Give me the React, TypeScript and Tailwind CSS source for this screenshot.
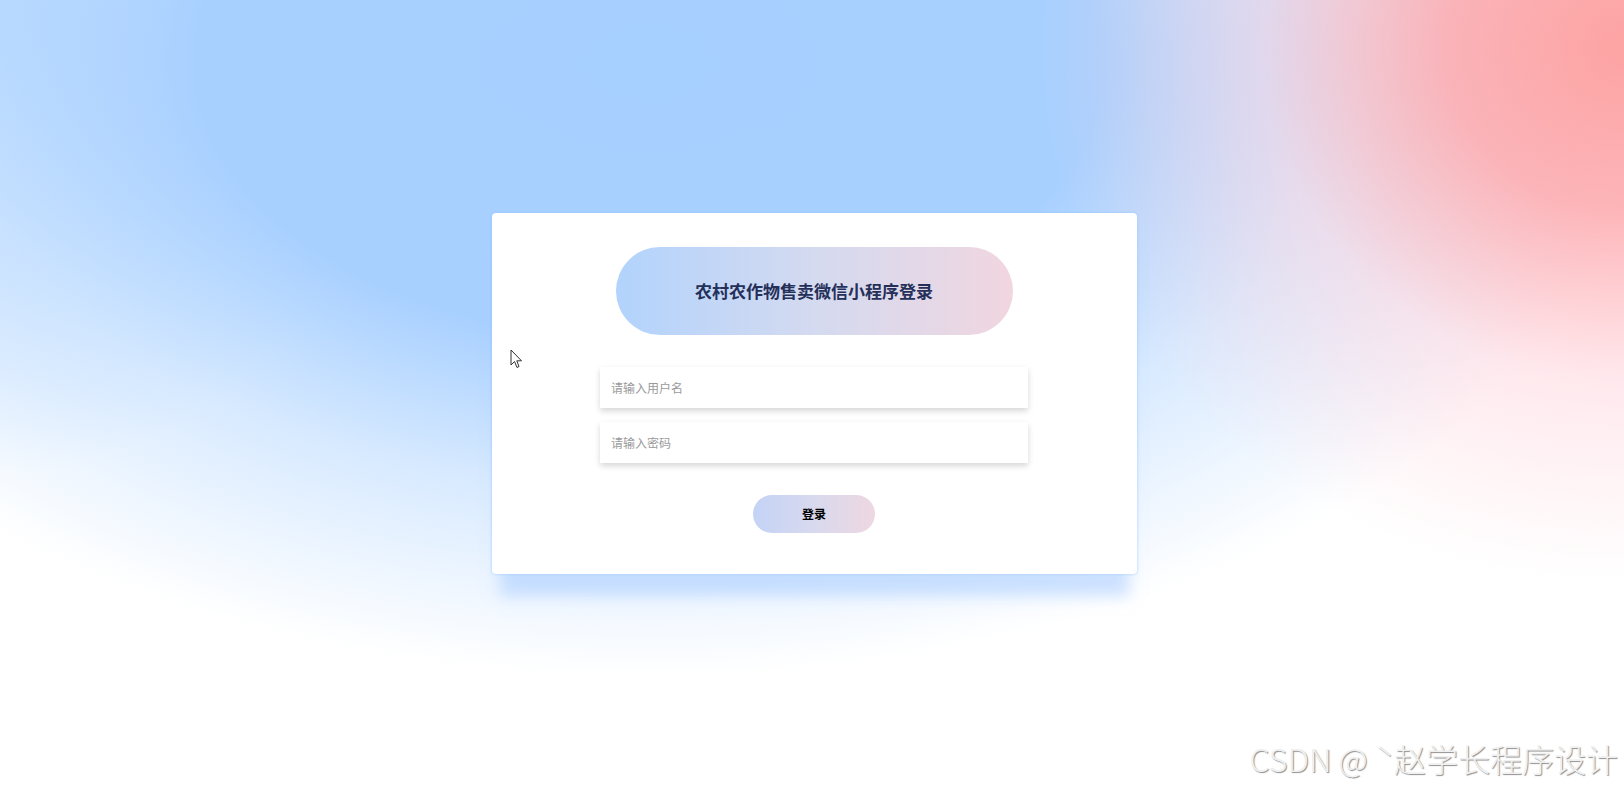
import React from "react";

const App: React.FC = () => {
  return (
    <div
      className="relative flex h-[787px] w-full items-center justify-center overflow-hidden bg-white bg-[radial-gradient(ellipse_36%_68%_at_100%_6%,#fda3a3_0%,rgba(253,168,172,0.85)_30%,rgba(255,205,215,0.45)_62%,transparent_100%),radial-gradient(ellipse_62%_78%_at_40%_8%,#a6d0ff_0%,#a8d0ff_45%,rgba(190,220,255,0.6)_70%,transparent_100%),radial-gradient(ellipse_25%_60%_at_0%_0%,#b4d8ff_0%,rgba(190,220,255,0.6)_50%,transparent_100%)]"
      style={{ fontFamily: '"Noto Sans CJK SC", "Noto Sans", sans-serif' }}
    >
      {/* Login card */}
      <div className="ml-[4px] flex h-[361px] w-[645px] flex-col items-center rounded-[4px] bg-white pt-[34px] shadow-[0_30px_14px_-8px_rgba(160,200,255,0.5),0_0_3px_rgba(140,190,255,0.7)]">
        <div className="flex h-[88px] w-[397px] items-center justify-center rounded-full bg-[linear-gradient(90deg,#b2d3fc_0%,#d4daf0_50%,#f1d6e0_100%)]">
          <span className="text-[17px] font-bold text-[#25305a]">
            农村农作物售卖微信小程序登录
          </span>
        </div>

        <div className="mt-[32px] flex w-[428px] flex-col gap-[14px]">
          <input
            className="h-[41px] w-full bg-white px-[11px] text-[12px] text-[#333] shadow-[0_3px_6px_rgba(0,0,0,0.16)] outline-none placeholder:text-[#9a9a9a]"
            placeholder="请输入用户名"
          />
          <input
            type="password"
            className="h-[41px] w-full bg-white px-[11px] text-[12px] text-[#333] shadow-[0_3px_6px_rgba(0,0,0,0.16)] outline-none placeholder:text-[#9a9a9a]"
            placeholder="请输入密码"
          />
        </div>

        <button className="mt-[32px] h-[38px] w-[122px] rounded-full bg-[linear-gradient(90deg,#c4d3f6_0%,#d8d9ee_50%,#eed7e1_100%)] text-[12px] font-bold text-black">
          登录
        </button>
      </div>

      {/* mouse cursor */}
      <svg
        className="absolute left-[510px] top-[349px]"
        width="14"
        height="20"
        viewBox="0 0 14 20"
      >
        <path
          d="M1 1 L1 16 L4.5 12.5 L7 18.5 L9 17.5 L6.8 11.8 L11.5 11.8 Z"
          fill="white"
          stroke="#333"
          strokeWidth="1"
          strokeLinejoin="round"
        />
      </svg>

      {/* watermark */}
      <div className="absolute bottom-[13px] right-[6px] text-[32px] font-light leading-none text-[#f0f0f0] [text-shadow:1px_1px_1px_rgba(0,0,0,0.45)]">
        CSDN @ ˋ赵学长程序设计
      </div>
    </div>
  );
};

export default App;
